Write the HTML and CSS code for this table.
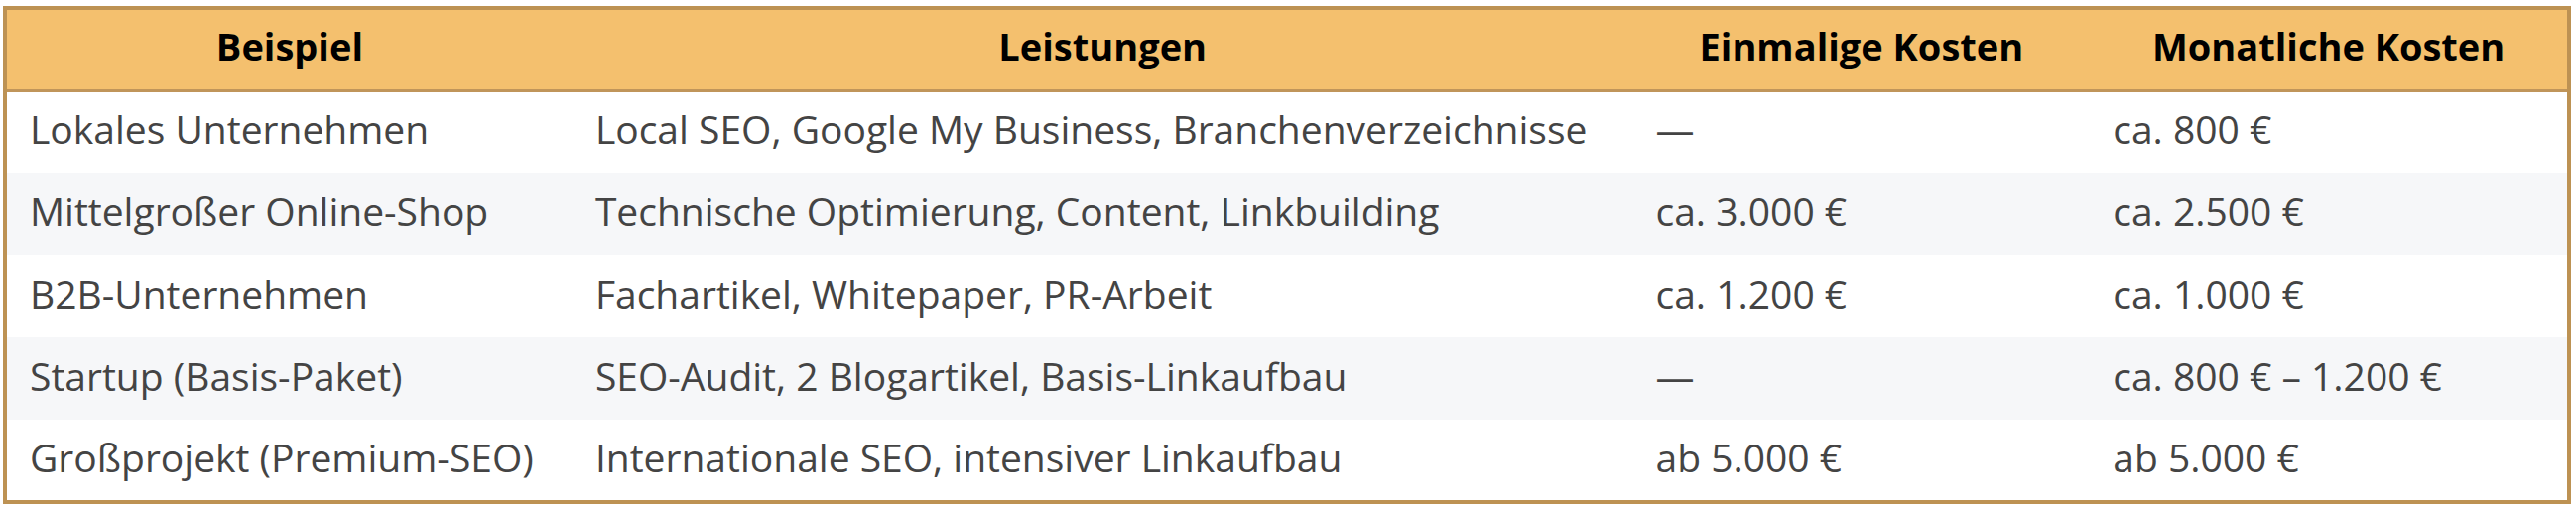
FILE: index.html
```html
<!DOCTYPE html>
<html lang="de">
<head>
<meta charset="utf-8">
<title>SEO Kosten Beispiele</title>
<link rel="stylesheet" href="styles.css">
</head>
<body>
<table class="costs">
  <colgroup>
    <col class="c1"><col class="c2"><col class="c3"><col class="c4">
  </colgroup>
  <thead>
    <tr><th>Beispiel</th><th>Leistungen</th><th>Einmalige Kosten</th><th>Monatliche Kosten</th></tr>
  </thead>
  <tbody>
    <tr><td>Lokales Unternehmen</td><td>Local SEO, Google My Business, Branchenverzeichnisse</td><td>—</td><td>ca. 800 €</td></tr>
    <tr><td>Mittelgroßer Online-Shop</td><td>Technische Optimierung, Content, Linkbuilding</td><td>ca. 3.000 €</td><td>ca. 2.500 €</td></tr>
    <tr><td>B2B-Unternehmen</td><td>Fachartikel, Whitepaper, PR-Arbeit</td><td>ca. 1.200 €</td><td>ca. 1.000 €</td></tr>
    <tr><td>Startup (Basis-Paket)</td><td>SEO-Audit, 2 Blogartikel, Basis-Linkaufbau</td><td>—</td><td>ca. 800 € – 1.200 €</td></tr>
    <tr><td>Großprojekt (Premium-SEO)</td><td>Internationale SEO, intensiver Linkaufbau</td><td>ab 5.000 €</td><td>ab 5.000 €</td></tr>
  </tbody>
</table>
</body>
</html>
```
FILE: styles.css
```css
html, body {
  margin: 0;
  padding: 0;
  background: #ffffff;
}
body {
  padding: 6px 0 0 3px;
  font-family: "Open Sans", "Liberation Sans", sans-serif;
}
.costs {
  width: 2588px;
  border-collapse: collapse;
  table-layout: fixed;
  border: 4px solid #bd9253;
}
.c1 { width: 571px; }
.c2 { width: 1067px; }
.c3 { width: 460px; }
.c4 { width: 482px; }
.costs th {
  box-sizing: border-box;
  height: 83px;
  padding: 0 23px 6px;
  line-height: 1.2;
  background: #f4c06e;
  color: #000000;
  font-weight: 700;
  font-size: 38px;
  text-align: center;
  border-bottom: 3px solid #c0955a;
  vertical-align: middle;
  white-space: nowrap;
}
.costs td {
  box-sizing: border-box;
  height: 83px;
  padding: 0 23px 5px;
  line-height: 1.2;
  color: #444444;
  font-size: 39px;
  font-weight: 400;
  vertical-align: middle;
  white-space: nowrap;
}
.costs tbody tr:nth-child(even) td {
  background: #f6f7f9;
}
```
